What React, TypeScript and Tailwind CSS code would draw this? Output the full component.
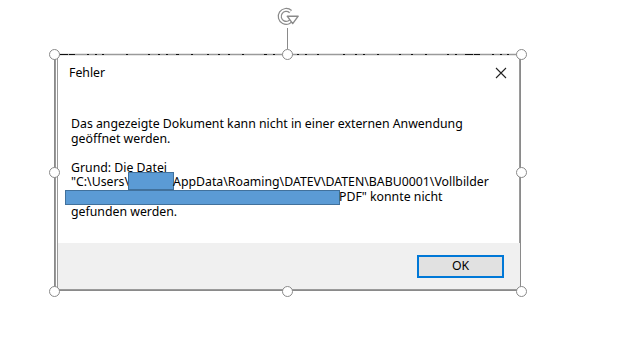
import React from "react";

const font = { fontFamily: '"Noto Sans", "Open Sans", "Liberation Sans", sans-serif' };

function Handle({ x, y }: { x: number; y: number }) {
  return (
    <div
      className="absolute w-[11px] h-[11px] rounded-full bg-white border-[1.5px] border-[#8a8a8a]"
      style={{ left: x - 5.5, top: y - 5.5 }}
    />
  );
}

function RotateIcon() {
  const arc = "M14.6 5.6 A6.5 6.5 0 1 0 16.4 12.5";
  return (
    <svg width="24" height="24" viewBox="0 0 24 24" className="absolute left-[276px] top-[6px]">
      <path d={arc} fill="none" stroke="#8a8a8a" strokeWidth="4.2" />
      <path d={arc} fill="none" stroke="#ffffff" strokeWidth="1.8" />
      <path d="M11.2 10.2 L22.2 10.2 L16.7 17.6 Z" fill="#ffffff" stroke="#8a8a8a" strokeWidth="1.4" strokeLinejoin="round" />
      <path d="M14.2 11.6 L19.2 11.6 L16.7 15 Z" fill="#ffffff" />
    </svg>
  );
}

export default function App() {
  return (
    <div className="relative w-[624px] h-[343px] bg-white overflow-hidden text-[12.3px] text-[#000]" style={font}>
      <div className="pt-[54px] pl-[55px]">
        <div className="w-[465px] h-[236px] border-x border-b border-[#9a9a9a] bg-white flex flex-col">
          <div className="w-[463px] h-full border-l border-[#9a9a9a] flex flex-col ml-[1px]">
            <div className="h-[38px] flex items-center justify-between pl-[11px] pr-[13px] shrink-0">
              <span className="leading-none">Fehler</span>
              <svg width="12" height="12" viewBox="0 0 12 12">
                <path d="M1 1 L11 11 M11 1 L1 11" stroke="#222" strokeWidth="1.1" />
              </svg>
            </div>
            <div className="flex-1 pl-[13px] pt-[25px] leading-[14.6px]">
              <div>Das angezeigte Dokument kann nicht in einer externen Anwendung</div>
              <div>geöffnet werden.</div>
              <div className="h-[14.6px]" />
              <div>Grund: Die Datei</div>
              <div className="whitespace-nowrap">
                "C:\Users\
                <span className="inline-block align-top w-[46px] h-[18px] -mt-[3px] -mb-[1px] -ml-[1px] -mr-[1px] bg-[#5b9bd5] border border-[#41719c]" />
                AppData\Roaming\DATEV\DATEN\BABU0001\Vollbilder
              </div>
              <div className="whitespace-nowrap">
                <span className="inline-block align-top w-[275px] h-[15px] -ml-[6px] -mr-[1px] bg-[#5b9bd5] border border-[#41719c]" />
                PDF" konnte nicht
              </div>
              <div>gefunden werden.</div>
            </div>
            <div className="h-[46px] shrink-0 bg-[#f0f0f0] flex justify-end pt-[12px] pr-[16px]">
              <button className="w-[87px] h-[23px] border-2 border-[#0078d7] bg-[#e1e1e1] flex items-center justify-center leading-none text-[12.3px]" style={font}>
                OK
              </button>
            </div>
          </div>
        </div>
      </div>

      {/* selection frame */}
      <div className="absolute left-[54px] top-[54px] w-[467px] h-[237px] border border-[#8a8a8a] pointer-events-none" />
      <svg width="467" height="3" className="absolute left-[54px] top-[53px]">
        <line x1="0" y1="1.5" x2="467" y2="1.5" stroke="#9a9a9a" strokeWidth="1.5" />
        <line x1="6" y1="1.5" x2="467" y2="1.5" stroke="#111" strokeWidth="1.2" strokeDasharray="8 1 6 12 2 6 2 5 2 22 2 20 2 8 2 6 2 8 3 12 2 14 2 9 2 8 2 12 2 20 3 6 2 8 2 12 2 6 2 10 2 24 2 10 2 6 2 12 2 20 2 10 2 12 2 20 2 6 2 8" />
      </svg>
      <div className="absolute left-[287px] top-[28px] w-px h-[21px] bg-[#8a8a8a]" />
      <RotateIcon />
      <Handle x={54} y={54} />
      <Handle x={287} y={54} />
      <Handle x={521} y={54} />
      <Handle x={54} y={172} />
      <Handle x={521} y={172} />
      <Handle x={54} y={291} />
      <Handle x={287} y={291} />
      <Handle x={521} y={291} />
    </div>
  );
}
